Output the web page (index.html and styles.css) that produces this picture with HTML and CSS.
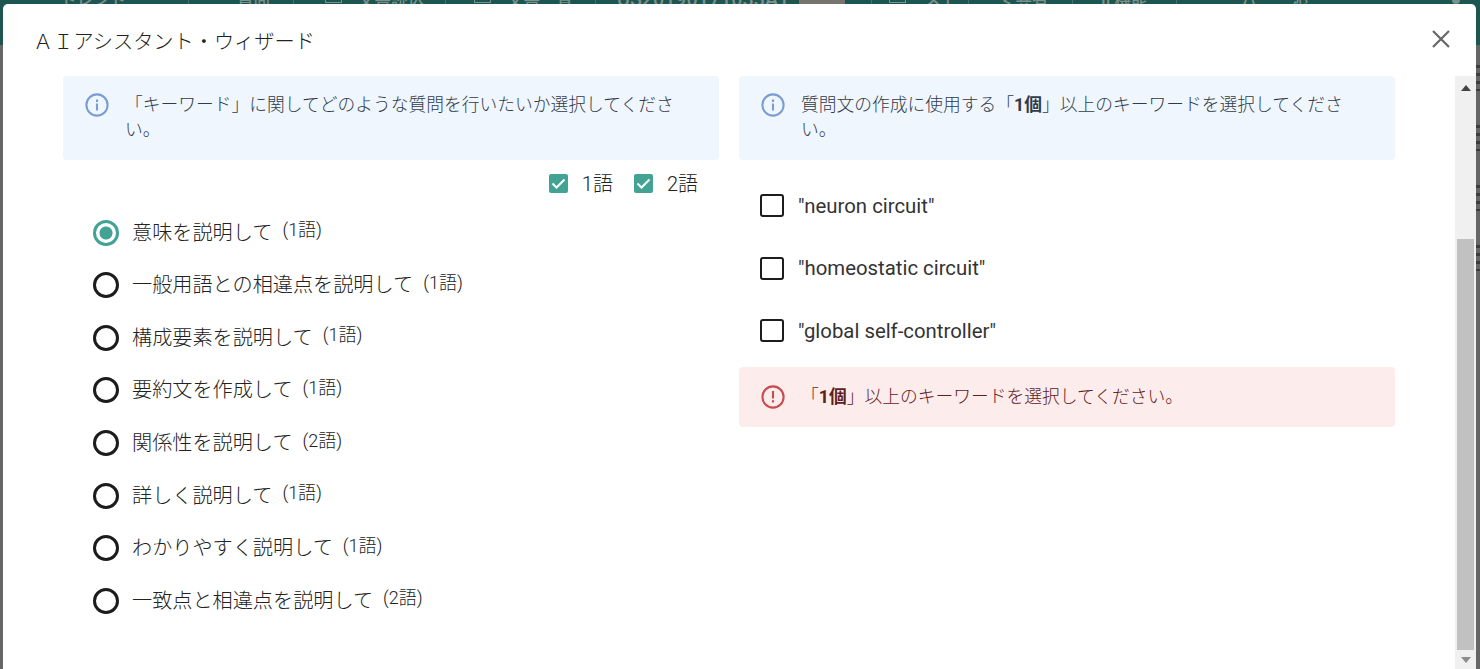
FILE: index.html
```
<!DOCTYPE html>
<html lang="ja">
<head>
    <meta charset="UTF-8">
    <meta name="viewport" content="width=device-width, initial-scale=1.0">
    <title>AIアシスタント・ウィザード</title>
    <link rel="stylesheet" href="styles.css">
</head>
<body>
    <!-- Dimmed page behind the dialog -->
    <header class="app-bar">
        <span class="nav-item nav-logo">トレント</span>
        <span class="nav-item nav-ask">質問</span>
        <span class="nav-item nav-load"><i class="nav-icon"></i>文書読込</span>
        <span class="nav-item nav-list"><i class="nav-icon"></i>文書一覧</span>
        <span class="nav-item nav-number">US20190171033A1<i class="thumb"></i></span>
        <span class="nav-item nav-memo"><i class="nav-icon"></i>メモ</span>
        <span class="nav-item nav-share">&lt; 共有</span>
        <span class="nav-item nav-tools">II 機能</span>
        <span class="nav-item nav-user"><span>八</span><span>沁</span></span>
        <i class="nav-dot"></i>
    </header>
    <div class="page-edge">
        <i></i><i></i><i></i><i></i>
    </div>

    <div class="dialog">
        <div class="dialog-title">
            <span>ＡＩアシスタント・ウィザード</span>
            <svg class="close" viewBox="0 0 18 18"><path d="M1 1L17 17M17 1L1 17"/></svg>
        </div>

        <div class="dialog-body">
            <div class="columns">
                <div class="column">
                    <div class="alert info">
                        <svg class="alert-icon" viewBox="0 0 24 24"><circle cx="12" cy="12" r="10.6"/><path d="M12 10.5v7M12 6.5v2.4"/></svg>
                        <p>「キーワード」に関してどのような質問を行いたいか選択してください。</p>
                    </div>
                    <div class="filters">
                        <label><svg class="check" viewBox="0 0 19 19"><rect width="19" height="19" rx="2"/><path d="M3.5 9.5L7.5 13.5L15.5 5.5"/></svg><span>1語</span></label>
                        <label><svg class="check" viewBox="0 0 19 19"><rect width="19" height="19" rx="2"/><path d="M3.5 9.5L7.5 13.5L15.5 5.5"/></svg><span>2語</span></label>
                    </div>
                    <div class="questions">
                        <label class="question selected"><i class="radio"></i><b>意味を説明して</b><span>(1語)</span></label>
                        <label class="question"><i class="radio"></i><b>一般用語との相違点を説明して</b><span>(1語)</span></label>
                        <label class="question"><i class="radio"></i><b>構成要素を説明して</b><span>(1語)</span></label>
                        <label class="question"><i class="radio"></i><b>要約文を作成して</b><span>(1語)</span></label>
                        <label class="question"><i class="radio"></i><b>関係性を説明して</b><span>(2語)</span></label>
                        <label class="question"><i class="radio"></i><b>詳しく説明して</b><span>(1語)</span></label>
                        <label class="question"><i class="radio"></i><b>わかりやすく説明して</b><span>(1語)</span></label>
                        <label class="question"><i class="radio"></i><b>一致点と相違点を説明して</b><span>(2語)</span></label>
                    </div>
                </div>

                <div class="column">
                    <div class="alert info">
                        <svg class="alert-icon" viewBox="0 0 24 24"><circle cx="12" cy="12" r="10.6"/><path d="M12 10.5v7M12 6.5v2.4"/></svg>
                        <p>質問文の作成に使用する「<b>1個</b>」以上のキーワードを選択してください。</p>
                    </div>
                    <div class="keywords">
                        <label class="keyword"><i class="box"></i>"neuron circuit"</label>
                        <label class="keyword"><i class="box"></i>"homeostatic circuit"</label>
                        <label class="keyword"><i class="box"></i>"global self-controller"</label>
                    </div>
                    <div class="alert error">
                        <svg class="alert-icon" viewBox="0 0 24 24"><circle cx="12" cy="12" r="10.6"/><path d="M12 6v7.4M12 15.2v2.4"/></svg>
                        <p>「<b>1個</b>」以上のキーワードを選択してください。</p>
                    </div>
                </div>
            </div>

            <div class="scrollbar">
                <svg class="arrow" viewBox="0 0 10 6"><path d="M0 6L5 0L10 6z"/></svg>
                <div class="thumb-bar"></div>
                <svg class="arrow down" viewBox="0 0 10 6"><path d="M0 0L5 6L10 0z"/></svg>
            </div>
        </div>
    </div>
</body>
</html>
```
FILE: styles.css
```
* {
    box-sizing: border-box;
}

body {
    margin: 0;
    width: 1480px;
    height: 669px;
    overflow: hidden;
    position: relative;
    background-color: #666;
    color: #222;
    font-family: Roboto, "Noto Sans CJK JP", sans-serif;
    font-weight: 300;
}

/* page behind the dialog */
.app-bar {
    display: flex;
    height: 45px;
    overflow: hidden;
    background-color: #1d5650;
    color: #7c908c;
    font-size: 16.5px;
    font-weight: 500;
    line-height: 20px;
}

.nav-item {
    display: flex;
    flex: none;
    height: 20px;
    margin-top: -9px;
    border-right: 1px solid #47716c;
    white-space: nowrap;
}

.nav-icon {
    width: 17px;
    height: 12px;
    margin: 0 16px 0 0;
    border: 1px solid #7c908c;
    border-top: none;
}

.nav-logo {
    width: 189px;
    padding-left: 60px;
}

.nav-ask {
    width: 105px;
    padding-left: 48px;
}

.nav-load {
    width: 152px;
    padding-left: 31px;
}

.nav-list {
    width: 150px;
    padding-left: 28px;
}

.nav-number {
    width: 276px;
    margin-top: -10px;
    padding-left: 21px;
    gap: 10px;
    font-size: 19.7px;
}

.thumb {
    width: 46px;
    height: 20px;
    background-color: #77736d;
}

.nav-memo {
    width: 97px;
    padding-left: 17px;
}

.nav-memo .nav-icon {
    margin-right: 18px;
}

.nav-share {
    width: 104px;
    padding-left: 34px;
    gap: 8px;
}

.nav-tools {
    width: 104px;
    padding-left: 28px;
}

.nav-user {
    padding-left: 64px;
    gap: 34px;
    border: none;
}

.nav-dot {
    width: 8px;
    height: 8px;
    margin: -4px 20px 0 auto;
    border-radius: 50%;
    background-color: #7c908c;
}

.page-edge {
    display: flex;
    flex-direction: column;
    align-items: flex-end;
    gap: 34px;
    padding-top: 20px;
}

.page-edge i {
    width: 4px;
    height: 26px;
    background: repeating-linear-gradient(#3c3c3c 0 3px, #666 3px 8px);
}

.dialog {
    position: absolute;
    top: 4px;
    left: 3px;
    width: 1473px;
    height: 665px;
    display: flex;
    flex-direction: column;
    background-color: #fff;
    border-radius: 5px 5px 0 0;
}

.dialog-title {
    display: flex;
    justify-content: space-between;
    align-items: center;
    height: 72px;
    padding: 0 26px 0 30px;
    font-size: 20.2px;
}

.close {
    width: 18px;
    height: 18px;
    margin-top: -2px;
    fill: none;
    stroke: #666;
    stroke-width: 2.2;
}

.dialog-body {
    display: flex;
    flex: 1;
    justify-content: space-between;
}

.columns {
    display: flex;
    gap: 20px;
    padding-left: 60px;
}

.column {
    width: 656px;
}

.alert {
    display: flex;
    gap: 16px;
    padding: 17px 22px;
    border-radius: 4px;
    font-size: 17.75px;
    line-height: 25px;
}

.alert p {
    width: 556px;
    margin: 0;
}

.alert b {
    font-weight: 700;
}

.alert-icon {
    flex: none;
    width: 24px;
    height: 24px;
    fill: none;
    stroke-width: 2.1;
}

.info {
    height: 84px;
    background-color: #f0f6fe;
    color: #303b4a;
}

.info .alert-icon {
    stroke: #7a9ed3;
}

.error {
    height: 60px;
    padding-top: 18px;
    background-color: #fdecec;
    color: #5f2120;
}

.error .alert-icon {
    stroke: #c94c4c;
}

.filters {
    display: flex;
    justify-content: flex-end;
    gap: 21px;
    height: 46px;
    padding-right: 21px;
    font-size: 20px;
}

.filters label {
    display: flex;
    align-items: center;
    gap: 14px;
}

.filters span {
    margin-top: -2px;
}

.check {
    width: 19px;
    height: 19px;
    fill: #42a395;
}

.check path {
    fill: none;
    stroke: #fff;
    stroke-width: 2;
}

.question {
    display: flex;
    align-items: center;
    height: 52.57px;
    padding-left: 30px;
    font-size: 20.15px;
}

.question b {
    margin-top: -2px;
    font-weight: 300;
}

.question span {
    margin: -8px 0 0 10px;
    font-size: 18px;
}

.radio {
    width: 26px;
    height: 26px;
    margin: 1px 13px 0 0;
    border: 3px solid #1c1c1c;
    border-radius: 50%;
}

.selected .radio {
    border-color: #42a395;
    background: radial-gradient(circle, #42a395 6px, #fff 7px);
}

.keywords {
    height: 207px;
    padding-top: 14.5px;
}

.keyword {
    display: flex;
    align-items: center;
    height: 62.5px;
    padding-left: 21px;
    gap: 14px;
    color: #333;
    font-size: 20.35px;
    font-weight: 400;
}

.box {
    width: 24px;
    height: 23px;
    border: 2.5px solid #1c1c1c;
    border-radius: 3px;
}

.scrollbar {
    display: flex;
    flex-direction: column;
    align-items: center;
    width: 21px;
    padding: 9px 0 6px;
    background-color: #f0f0f0;
}

.arrow {
    width: 10px;
    height: 6px;
    fill: #444;
}

.arrow.down {
    margin-top: 7px;
    fill: #8c8c8c;
}

.thumb-bar {
    flex: 1;
    width: 17px;
    margin-top: 148px;
    background-color: #c1c1c1;
}
```
